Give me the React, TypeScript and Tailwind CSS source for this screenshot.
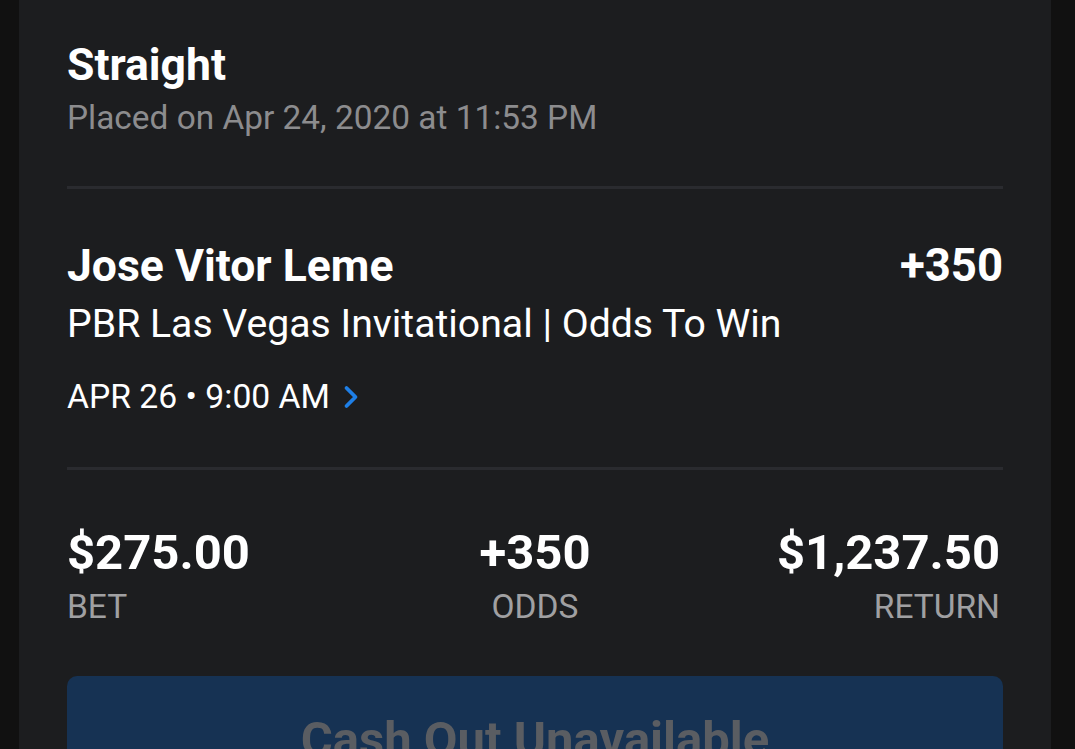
import { ChevronRight } from 'lucide-react';

const font = { fontFamily: 'Roboto, "Noto Sans", sans-serif' };

export default function App() {
  return (
    <div className="w-[1075px] h-[749px] overflow-hidden bg-[#111111]" style={font}>
      <div className="mx-[19px] w-[1032px] h-full bg-[#1c1d1f] px-12 pt-[39px]">
        {/* Header */}
        <div className="pb-[41px] border-b-[3px] border-[#2a2b2f]">
          <h1 className="text-white font-bold text-[44.5px] leading-[52px]">Straight</h1>
          <p className="text-[#8c8c8e] text-[33.4px] leading-[54px]">Placed on Apr 24, 2020 at 11:53 PM</p>
        </div>

        {/* Selection */}
        <div className="pt-[47px] pb-[50px] border-b-[3px] border-[#2a2b2f]">
          <div className="flex justify-between items-center">
            <span className="text-white font-bold text-[44.5px] leading-[60px]">Jose Vitor Leme</span>
            <span className="text-white font-bold text-[45.5px] leading-[60px]">+350</span>
          </div>
          <p className="text-white text-[39.2px] leading-[56px]">PBR Las Vegas Invitational | Odds To Win</p>
          <div className="flex items-center mt-[25px]">
            <span className="text-white text-[33.7px] leading-[40px]">APR 26 • 9:00 AM</span>
            <ChevronRight className="ml-[3px] w-[36px] h-[36px] text-[#1e7fe6]" strokeWidth={2.5} />
          </div>
        </div>

        {/* Totals */}
        <div className="grid grid-cols-3 pt-[55px]">
          <div className="flex flex-col items-start">
            <span className="text-white font-bold text-[49px] leading-[56px]">$275.00</span>
            <span className="text-[#a0a0a2] text-[33.5px] leading-[52px]">BET</span>
          </div>
          <div className="flex flex-col items-center">
            <span className="text-white font-bold text-[49px] leading-[56px]">+350</span>
            <span className="text-[#a0a0a2] text-[33.5px] leading-[52px]">ODDS</span>
          </div>
          <div className="flex flex-col items-end pr-[3px]">
            <span className="text-white font-bold text-[49px] leading-[56px]">$1,237.50</span>
            <span className="text-[#a0a0a2] text-[33.5px] leading-[52px]">RETURN</span>
          </div>
        </div>

        <button className="mt-[43px] w-full h-[110px] rounded-[10px] bg-[#163253] flex justify-center pt-[36px]">
          <span className="text-[#5a5d62] font-bold text-[49px] leading-[56px]">Cash Out Unavailable</span>
        </button>
      </div>
    </div>
  );
}
